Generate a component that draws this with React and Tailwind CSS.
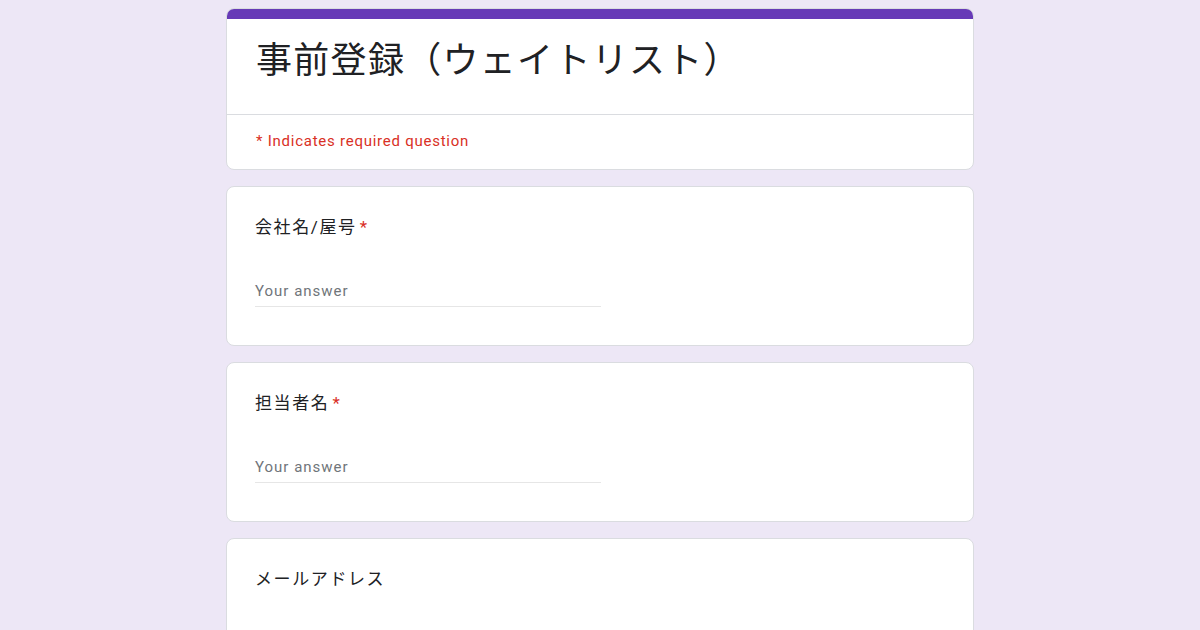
import React from 'react';

const jp = { fontFamily: 'Roboto, "Noto Sans CJK JP", sans-serif' };

const Question = ({ label, required, showInput = true }) => (
    <div className="bg-white border border-[#dadce0] rounded-lg px-[28px] pt-[28px] pb-[38px]" style={jp}>
        <div className="text-[17px] leading-[24px] text-[#202124] tracking-[1.6px]">
            {label}
            {required && <span className="text-[#d93025] ml-[3px]">*</span>}
        </div>
        {showInput && (
            <div className="mt-[40px] w-[346px] border-b border-[#e6e6e6] pb-[3px]">
                <span className="text-[15px] leading-[20px] text-[#70757a] tracking-[1px]">Your answer</span>
            </div>
        )}
    </div>
);

const App = () => {
    return (
        <div className="min-h-screen bg-[#ede7f6] pt-2 overflow-hidden" style={jp}>
            <div className="w-[748px] mx-auto flex flex-col gap-4">
                <div className="bg-white border border-[#dadce0] rounded-lg overflow-hidden">
                    <div className="h-[10px] bg-[#673ab7]"></div>
                    <div className="px-[29px] pt-[14px] pb-[33px] border-b border-[#dadce0]">
                        <h1 className="text-[36px] leading-[48px] text-[#202124] font-normal tracking-[1.3px]" style={{ fontFamily: '"Noto Sans CJK JP", sans-serif' }}>
                            事前登録（ウェイトリスト）
                        </h1>
                    </div>
                    <div className="px-[29px] pt-4 pb-[18px] text-[15px] leading-[20px] text-[#d93025] tracking-[0.75px]">
                        * Indicates required question
                    </div>
                </div>
                <Question label="会社名/屋号" required />
                <Question label="担当者名" required />
                <Question label="メールアドレス" />
            </div>
        </div>
    );
};

export default App;
